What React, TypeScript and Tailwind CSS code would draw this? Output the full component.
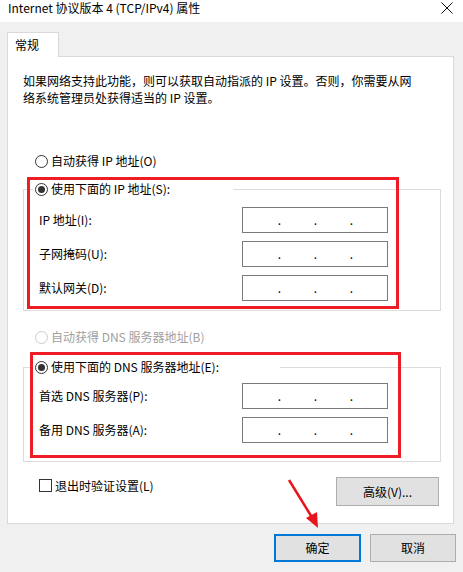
import React from 'react';

const font = { fontFamily: '"Noto Sans CJK SC", "Noto Sans", sans-serif' };

function Radio({ checked, disabled }: { checked?: boolean; disabled?: boolean }) {
  return (
    <span
      className={`flex h-[13px] w-[13px] shrink-0 items-center justify-center rounded-full border bg-white ${
        disabled ? 'border-[#cccccc]' : 'border-[#333333]'
      }`}
    >
      {checked && <span className="h-[7px] w-[7px] rounded-full bg-[#333333]" />}
    </span>
  );
}

function IpBox() {
  return (
    <div className="flex h-[26px] w-[146px] items-center border border-[#7a7a7a] bg-white">
      {[0, 1, 2, 3].map((i) => (
        <div key={i} className="relative h-full w-[36px]">
          {i < 3 && (
            <span className="absolute right-[-2px] top-[5px] text-[12px] leading-[14px]">.</span>
          )}
        </div>
      ))}
    </div>
  );
}

function Row({ label }: { label: string }) {
  return (
    <div className="flex h-[26px] items-center">
      <span className="w-[218px] shrink-0 pl-[15px] text-[12px]">{label}</span>
      <IpBox />
    </div>
  );
}

export default function App() {
  return (
    <div className="relative h-[572px] w-[463px] overflow-hidden bg-[#f0f0f0] text-black" style={font}>
      {/* title bar */}
      <div className="flex h-[22px] items-start justify-between bg-white pl-[8px] pr-[10px]">
        <span className="text-[12px] leading-[15px]">Internet 协议版本 4 (TCP/IPv4) 属性</span>
        <svg width="12" height="12" viewBox="0 0 12 12" className="mt-[2px]">
          <path d="M0.5 0.5 L11.5 11.5 M11.5 0.5 L0.5 11.5" stroke="#111" strokeWidth="1" fill="none" />
        </svg>
      </div>

      <div className="px-[7px] pt-[10px]">
        {/* tab */}
        <div className="relative z-10 -mb-px flex">
          <div className="h-[25px] w-[52px] border border-b-0 border-[#d9d9d9] bg-white pl-[7px] text-[12px] leading-[23px]">
            常规
          </div>
        </div>

        {/* panel */}
        <div className="h-[468px] w-[447px] border border-[#d9d9d9] bg-white">
          <p className="mt-[15px] pl-[15px] text-[12px] leading-[17px]">
            如果网络支持此功能，则可以获取自动指派的 IP 设置。否则，你需要从网
            <br />
            络系统管理员处获得适当的 IP 设置。
          </p>

          <div className="mt-[47px] flex h-[16px] items-center gap-[3px] pl-[27px] text-[12px]">
            <Radio />
            <span>自动获得 IP 地址(O)</span>
          </div>

          <fieldset className="ml-[15px] mt-[12px] w-[418px] border border-[#dcdcdc] pb-[9px]">
            <legend className="ml-[9px] flex h-[16px] w-[200px] items-center gap-[3px] px-[2px] text-[12px]">
              <Radio checked />
              <span>使用下面的 IP 地址(S):</span>
            </legend>
            <div className="flex flex-col gap-[8px] pt-[10px]">
              <Row label="IP 地址(I):" />
              <Row label="子网掩码(U):" />
              <Row label="默认网关(D):" />
            </div>
          </fieldset>

          <div className="mt-[18px] flex h-[16px] items-center gap-[3px] pl-[27px] text-[12px] text-[#a0a0a0]">
            <Radio disabled />
            <span>自动获得 DNS 服务器地址(B)</span>
          </div>

          <fieldset className="ml-[15px] mt-[14px] w-[418px] border border-[#dcdcdc] pb-[18px]">
            <legend className="ml-[9px] flex h-[16px] w-[247px] items-center gap-[3px] px-[2px] text-[12px]">
              <Radio checked />
              <span>使用下面的 DNS 服务器地址(E):</span>
            </legend>
            <div className="flex flex-col gap-[8px] pt-[8px]">
              <Row label="首选 DNS 服务器(P):" />
              <Row label="备用 DNS 服务器(A):" />
            </div>
          </fieldset>

          <div className="mt-[15px] flex items-start justify-between pl-[31px] pr-[14px]">
            <div className="flex h-[17px] items-center gap-[3px] text-[12px]">
              <span className="h-[13px] w-[13px] border border-[#333333] bg-white" />
              <span>退出时验证设置(L)</span>
            </div>
            <button className="h-[29px] w-[103px] border border-[#adadad] bg-[#e1e1e1] text-[12px]">
              高级(V)...
            </button>
          </div>
        </div>
      </div>

      {/* dialog buttons */}
      <div className="mt-[10px] flex justify-end gap-[9px] pr-[7px]">
        <button className="h-[28px] w-[87px] border-2 border-[#0078d7] bg-[#e1e1e1] text-[12px]">确定</button>
        <button className="h-[28px] w-[86px] border border-[#adadad] bg-[#e1e1e1] text-[12px]">取消</button>
      </div>

      {/* red annotations */}
      <div className="pointer-events-none absolute left-[27px] top-[177px] h-[132px] w-[372px] border-[3px] border-[#ee1c25]" />
      <div className="pointer-events-none absolute left-[30px] top-[352px] h-[106px] w-[371px] border-[3px] border-[#ee1c25]" />
      <svg className="pointer-events-none absolute left-0 top-0" width="463" height="572">
        <line x1="289" y1="480" x2="313" y2="519" stroke="#e8141c" strokeWidth="2.5" />
        <polygon points="318,528 306,518 317,512" fill="#e8141c" />
      </svg>
    </div>
  );
}
